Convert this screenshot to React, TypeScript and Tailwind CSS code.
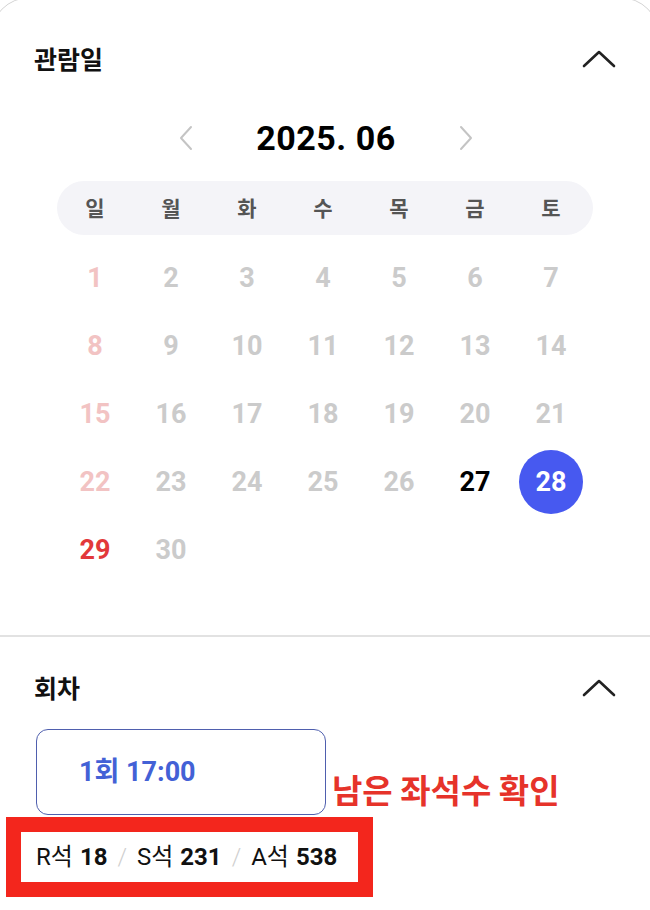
import React from 'react';

const weekdays = ['일', '월', '화', '수', '목', '금', '토'];

type Day = { d: number; tone: 'past' | 'pastSun' | 'sun' | 'avail' | 'selected' };

function dayTone(d: number): Day['tone'] {
  if (d === 28) return 'selected';
  if (d === 27) return 'avail';
  if (d === 29) return 'sun';
  if ((d - 1) % 7 === 0) return 'pastSun';
  return 'past';
}

const days: Day[] = Array.from({ length: 30 }, (_, i) => ({ d: i + 1, tone: dayTone(i + 1) }));

function ChevronUp() {
  return (
    <svg width="34" height="20" viewBox="0 0 34 20" fill="none">
      <path d="M2 17L17 3L32 17" stroke="#222" strokeWidth="2.6" strokeLinecap="round" strokeLinejoin="round" />
    </svg>
  );
}

function MonthArrow({ dir }: { dir: 'left' | 'right' }) {
  return (
    <svg width="14" height="26" viewBox="0 0 14 26" fill="none">
      <path
        d={dir === 'left' ? 'M12 2L2 13L12 24' : 'M2 2L12 13L2 24'}
        stroke="#c4c4c4"
        strokeWidth="2"
        strokeLinecap="round"
        strokeLinejoin="round"
      />
    </svg>
  );
}

function DayCell({ day }: { day: Day }) {
  const base = 'h-[68px] flex items-center justify-center text-[27px] font-bold';
  if (day.tone === 'selected') {
    return (
      <div className={base}>
        <span className="w-[64px] h-[64px] rounded-full bg-[#4759f0] text-white flex items-center justify-center">
          {day.d}
        </span>
      </div>
    );
  }
  const color =
    day.tone === 'avail'
      ? 'text-black'
      : day.tone === 'sun'
        ? 'text-[#e2383a]'
        : day.tone === 'pastSun'
          ? 'text-[#f2c3c3]'
          : 'text-[#cbcbcb]';
  return <div className={`${base} ${color}`}>{day.d}</div>;
}

export default function App() {
  return (
    <div className="w-[650px] h-[910px] overflow-hidden bg-white font-['Roboto','Noto_Sans_CJK_KR',sans-serif]">
      <div className="-mx-[10px] -mt-[3px] rounded-t-[40px] border border-[#d4d4d4] bg-white min-h-[930px]">
        {/* 관람일 */}
        <section className="px-[43px] pt-[33px]">
          <div className="flex items-center justify-between h-[56px]">
            <h2 className="text-[25px] font-bold text-[#111] font-['Noto_Sans_CJK_KR',sans-serif]">관람일</h2>
            <ChevronUp />
          </div>

          <div className="flex items-center justify-center h-[48px] mt-[27px] pl-[2px]">
            <div className="w-[40px] flex justify-center">
              <MonthArrow dir="left" />
            </div>
            <div className="w-[240px] text-center text-[34px] font-bold text-black tracking-[0.5px]">2025. 06</div>
            <div className="w-[40px] flex justify-center">
              <MonthArrow dir="right" />
            </div>
          </div>

          <div className="ml-[23px]">
            <div className="mt-[19px] w-[536px] h-[54px] rounded-full bg-[#f4f4f8] grid grid-cols-[repeat(7,76px)] items-center">
              {weekdays.map((w) => (
                <div key={w} className="text-center text-[21px] font-bold text-[#555] font-['Noto_Sans_CJK_KR',sans-serif]">
                  {w}
                </div>
              ))}
            </div>

            <div className="mt-[9px] grid grid-cols-[repeat(7,76px)]">
              {days.map((day) => (
                <DayCell key={day.d} day={day} />
              ))}
            </div>
          </div>
          <div className="h-[51px]" />
        </section>

        <div className="h-[2px] bg-[#e2e2e2]" />

        {/* 회차 */}
        <section className="px-[43px] pt-[23px] relative">
          <div className="flex items-center justify-between h-[56px]">
            <h2 className="text-[25px] font-bold text-[#111] font-['Noto_Sans_CJK_KR',sans-serif]">회차</h2>
            <ChevronUp />
          </div>

          <button className="block mt-[13px] ml-[2px] w-[290px] h-[86px] rounded-[12px] border-[1.5px] border-[#4f5fae] text-left pl-[42px] text-[27px] font-bold text-[#4361d6]">
            1회 17:00
          </button>

          <span className="absolute left-[341px] top-[128px] text-[33px] font-bold text-[#e6332a] font-['Noto_Sans_CJK_KR',sans-serif]">
            남은 좌석수 확인
          </span>

          <div className="-ml-[28px] mt-[2px] w-[367px] border-[15px] border-[#f3261d] bg-white">
            <div className="h-[50px] flex items-center pl-[15px] text-[24px] text-[#111]">
              <span>R석</span>
              <b className="ml-[7px]">18</b>
              <span className="mx-[10px] text-[#cfcfcf] font-light">/</span>
              <span>S석</span>
              <b className="ml-[7px]">231</b>
              <span className="mx-[10px] text-[#cfcfcf] font-light">/</span>
              <span>A석</span>
              <b className="ml-[7px]">538</b>
            </div>
          </div>
        </section>
      </div>
    </div>
  );
}
